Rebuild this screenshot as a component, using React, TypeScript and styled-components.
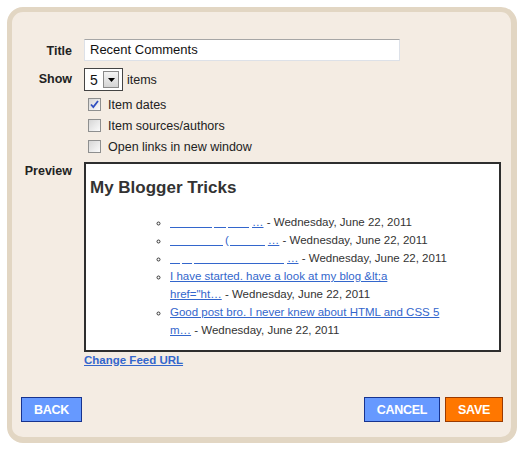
import styled, { createGlobalStyle } from 'styled-components';

const GlobalStyle = createGlobalStyle`
  html, body {
    margin: 0;
    padding: 0;
    background: #ffffff;
  }
  body {
    font-family: 'Liberation Sans', Arial, sans-serif;
    color: #333;
  }
`;

interface Comment {
  blanks?: number[];
  text?: string[];
  date: string;
}

const comments: Comment[] = [
  { blanks: [42, 12, 21], date: 'Wednesday, June 22, 2011' },
  { blanks: [53, -1, 35], date: 'Wednesday, June 22, 2011' },
  { blanks: [10, 10, 90], date: 'Wednesday, June 22, 2011' },
  { text: ['I have started. have a look at my blog &lt;a', 'href="ht…'], date: 'Wednesday, June 22, 2011' },
  { text: ['Good post bro. I never knew about HTML and CSS 5', 'm…'], date: 'Wednesday, June 22, 2011' },
];

const CheckIcon = () => (
  <svg width="11" height="11" viewBox="0 0 11 11">
    <path d="M2 5.5 L4.3 8 L9 2" fill="none" stroke="#2f4fc0" strokeWidth="1.8" />
  </svg>
);

const Checkbox = ({ checked, label }: { checked?: boolean; label: string }) => (
  <CheckRow>
    <Box>{checked && <CheckIcon />}</Box>
    {label}
  </CheckRow>
);

export default function App() {
  return (
    <>
      <GlobalStyle />
      <Frame>
        <Field>
          <Label $offset={1}>Title</Label>
          <TextInput>Recent Comments</TextInput>
        </Field>

        <Field $gap={6}>
          <Label>Show</Label>
          <ShowRow>
            <Select>
              5
              <SelectButton>
                <svg width="7" height="4" viewBox="0 0 7 4">
                  <path d="M0 0 H7 L3.5 4 Z" fill="#000" />
                </svg>
              </SelectButton>
            </Select>
            items
          </ShowRow>
        </Field>

        <Field $gap={3}>
          <span />
          <Options>
            <Checkbox checked label="Item dates" />
            <Checkbox label="Item sources/authors" />
            <Checkbox label="Open links in new window" />
          </Options>
        </Field>

        <Field $gap={5}>
          <Label $offset={-2}>Preview</Label>
          <div>
            <Preview>
              <BlogTitle>My Blogger Tricks</BlogTitle>
              <CommentList>
                {comments.map((c, i) => (
                  <li key={i}>
                    <Link href="#">
                      {c.blanks &&
                        c.blanks.map((w, j) =>
                          w < 0 ? (
                            <Paren key={j}>(</Paren>
                          ) : (
                            <Blank key={j} style={{ width: w }} />
                          ),
                        )}
                      {c.blanks && <Gap />}
                      {c.text &&
                        c.text.map((t, j) => (
                          <span key={j}>
                            {j > 0 && <br />}
                            {t}
                          </span>
                        ))}
                      {c.blanks && '…'}
                    </Link>{' '}
                    - {c.date}
                  </li>
                ))}
              </CommentList>
            </Preview>
            <FeedLink href="#">Change Feed URL</FeedLink>
          </div>
        </Field>

        <Footer>
          <Button>BACK</Button>
          <Actions>
            <Button>CANCEL</Button>
            <Button $primary>SAVE</Button>
          </Actions>
        </Footer>
      </Frame>
    </>
  );
}

const Frame = styled.div`
  box-sizing: border-box;
  margin: 7px 0 0 7px;
  width: 510px;
  height: 436px;
  background: #f4ece3;
  border: 5px solid #e2d6c3;
  border-right-width: 6px;
  border-bottom-width: 6px;
  border-radius: 16px;
  padding-top: 27px;
  display: flex;
  flex-direction: column;
`;

const Field = styled.div<{ $gap?: number }>`
  display: grid;
  grid-template-columns: 60px 1fr;
  column-gap: 12px;
  align-items: start;
  margin-top: ${(p) => p.$gap ?? 0}px;
`;

const Label = styled.div<{ $offset?: number }>`
  text-align: right;
  font-weight: bold;
  font-size: 12.5px;
  line-height: 22px;
  color: #222;
  margin-top: ${(p) => p.$offset ?? 0}px;
`;

const TextInput = styled.div`
  box-sizing: border-box;
  width: 316px;
  height: 22px;
  background: #fff;
  border: 1px solid #dde1e8;
  border-top-color: #a6a6a6;
  padding-left: 5px;
  font-size: 13px;
  line-height: 20px;
  color: #111;
`;

const ShowRow = styled.div`
  display: flex;
  align-items: center;
  gap: 4px;
  font-size: 12.5px;
  color: #222;
`;

const Select = styled.div`
  box-sizing: border-box;
  width: 39px;
  height: 23px;
  background: #fff;
  border: 1px solid #444;
  display: flex;
  align-items: center;
  justify-content: space-between;
  padding: 0 3px 0 5px;
  font-size: 14px;
  color: #111;
`;

const SelectButton = styled.span`
  box-sizing: border-box;
  width: 16px;
  height: 17px;
  border: 1px solid #8a8a8a;
  background: linear-gradient(#f4f4f4, #d4d4d4);
  display: flex;
  align-items: center;
  justify-content: center;
`;

const Options = styled.div`
  display: flex;
  flex-direction: column;
  padding-left: 4px;
`;

const CheckRow = styled.div`
  height: 21px;
  display: flex;
  align-items: center;
  gap: 7px;
  font-size: 12.5px;
  color: #222;
`;

const Box = styled.span`
  box-sizing: border-box;
  width: 13px;
  height: 13px;
  border: 1px solid #8e8f8f;
  background: linear-gradient(135deg, #d6d6d6, #fbfbfb);
  display: flex;
  align-items: center;
  justify-content: center;
`;

const Preview = styled.div`
  box-sizing: border-box;
  width: 417px;
  height: 190px;
  background: #fff;
  border: 2px solid #2e2e2e;
  padding: 10px 4px 0;
`;

const BlogTitle = styled.h2`
  margin: 0 0 11px;
  font-size: 17px;
  line-height: 28px;
  font-weight: bold;
  color: #333;
`;

const CommentList = styled.ul`
  margin: 0;
  padding-left: 80px;
  list-style-type: circle;
  font-size: 11.5px;
  line-height: 18px;
  color: #333;
`;

const Link = styled.a`
  color: #3366cc;
  text-decoration: underline;
`;

const Blank = styled.span`
  display: inline-block;
  height: 0;
  border-bottom: 1px solid #3366cc;
  margin-right: 2px;
  vertical-align: -2px;
`;

const Paren = styled.span`
  display: inline-block;
  margin-right: 1px;
`;

const Gap = styled.span`
  display: inline-block;
  width: 1px;
`;

const FeedLink = styled.a`
  display: block;
  margin-top: 1px;
  font-size: 11.5px;
  line-height: 14px;
  font-weight: bold;
  color: #3366cc;
  text-decoration: underline;
`;

const Footer = styled.div`
  margin-top: auto;
  display: flex;
  justify-content: space-between;
  padding: 0 8px 15px 9px;
`;

const Actions = styled.div`
  display: flex;
  gap: 5px;
`;

const Button = styled.button<{ $primary?: boolean }>`
  box-sizing: border-box;
  height: 25px;
  padding: 0 12px;
  border: 1px solid ${(p) => (p.$primary ? '#9a3a00' : '#17338f')};
  background: ${(p) => (p.$primary ? '#ff7700' : '#6699ff')};
  color: #fff;
  font-family: 'Liberation Sans', Arial, sans-serif;
  font-size: 12.5px;
  font-weight: bold;
  letter-spacing: -0.3px;
  cursor: pointer;
`;
